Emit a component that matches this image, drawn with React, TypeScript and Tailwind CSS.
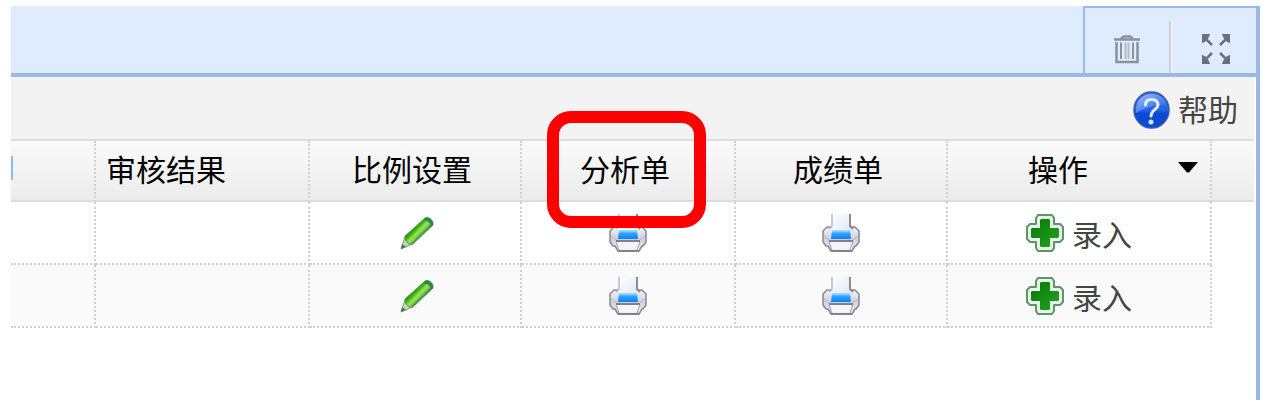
import * as React from "react";

function TrashIcon() {
  return (
    <svg width="28" height="30" viewBox="0 0 28 30" fill="none" stroke="#8b909d" aria-hidden>
      <path d="M1 5.500H27" strokeWidth="2.5" />
      <path d="M8 4.500L11 2.500H17L20 4.500" strokeWidth="2.5" />
      <path d="M3.500 8V28H24.500V8" strokeWidth="2.5" />
      <path d="M8 8.500V25M20 8.500V25" strokeWidth="2" />
      <path d="M12.500 8.500V25M15.500 8.500V25" strokeWidth="2" stroke="#b3bac8" />
    </svg>
  );
}

function ExpandIcon() {
  return (
    <svg width="30" height="32" viewBox="0 0 30 32" fill="#6b6f7b" stroke="#6b6f7b" aria-hidden>
      <g stroke="none">
        <path d="M1 1H9L8 4L4 9L1 10Z" />
        <path d="M29 1H21L22 4L26 9L29 10Z" />
        <path d="M1 31H9L8 28L4 23L1 22Z" />
        <path d="M29 31H21L22 28L26 23L29 22Z" />
      </g>
      <path d="M4 5L11 12M26 5L19 12M4 27L11 20M26 27L19 20" strokeWidth="2.5" />
    </svg>
  );
}

function HelpIcon() {
  return (
    <svg width="37" height="38" viewBox="0 0 37 38" aria-hidden>
      <defs>
        <linearGradient id="help-fill" x1="0" y1="0" x2="0" y2="1">
          <stop offset="0" stopColor="#3c6fe0" />
          <stop offset="0.5" stopColor="#2262e2" />
          <stop offset="0.6" stopColor="#0a4bd2" />
          <stop offset="1" stopColor="#0b49d0" />
        </linearGradient>
        <linearGradient id="help-shine" x1="0" y1="0" x2="1" y2="1">
          <stop offset="0" stopColor="#a9c8ff" />
          <stop offset="1" stopColor="#3d7cf0" stopOpacity="0.2" />
        </linearGradient>
      </defs>
      <ellipse cx="18.5" cy="19" rx="17.5" ry="18" fill="url(#help-fill)" stroke="#3458b4" strokeWidth="1.5" />
      <path d="M3 19C3 9 10 3 18.5 3C27 3 33 8 34 14C27 13 13 16 3 22Z" fill="url(#help-shine)" />
      <path
        d="M12.500 14C12.500 10 15 8.500 18.500 8.500C22.500 8.500 25 10.500 25 14C25 18.500 18 18.500 18 25"
        fill="none"
        stroke="#e3ebff"
        strokeWidth="3"
        strokeLinecap="round"
      />
      <circle cx="18" cy="31" r="2.5" fill="#d9e4ff" />
    </svg>
  );
}

function PencilIcon() {
  return (
    <svg width="34" height="34" viewBox="0 0 34 34" aria-hidden>
      <defs>
        <linearGradient id="pencil-fill" x1="12" y1="11" x2="21" y2="20" gradientUnits="userSpaceOnUse">
          <stop offset="0.1" stopColor="#129312" />
          <stop offset="0.35" stopColor="#3cb60c" />
          <stop offset="0.6" stopColor="#9be04f" />
          <stop offset="0.75" stopColor="#8fd660" />
          <stop offset="1" stopColor="#2d8f2f" />
        </linearGradient>
      </defs>
      <path d="M1 33L5 21L12 28Z" fill="#c9d3ba" stroke="#79a07d" strokeWidth="1" strokeLinejoin="round" />
      <path d="M5 20L25 2C28 0 34 4 33 9L13 28Q11 30 8 27Q4 24 5 20Z" fill="url(#pencil-fill)" stroke="#629967" strokeWidth="1" />
      <path d="M25 2C28 0 34 4 33 9L31 11C31 7 28 5 23 4Z" fill="#2b8a4c" />
      <path d="M1 33L2 28L6 31Z" fill="#497954" />
    </svg>
  );
}

function PrinterIcon() {
  return (
    <svg width="38" height="38" viewBox="0 0 38 38" aria-hidden>
      <defs>
        <linearGradient id="printer-body" x1="0" y1="0" x2="0" y2="1">
          <stop offset="0" stopColor="#f4f4f8" />
          <stop offset="0.5" stopColor="#cfcfdf" />
          <stop offset="1" stopColor="#f4f4f6" />
        </linearGradient>
        <linearGradient id="printer-blue" x1="0" y1="0" x2="0" y2="1">
          <stop offset="0" stopColor="#b9e3fa" />
          <stop offset="0.4" stopColor="#2ba2fb" />
          <stop offset="1" stopColor="#0c80fb" />
        </linearGradient>
        <linearGradient id="printer-paper" x1="0" y1="0" x2="1" y2="1">
          <stop offset="0" stopColor="#ffffff" />
          <stop offset="1" stopColor="#dce7f4" />
        </linearGradient>
      </defs>
      <path
        d="M9 13H5L1 17V28L4 32H6L9 37H30L33 32H34L37 28V17L33 13Z"
        fill="url(#printer-body)"
        stroke="#88888e"
        strokeWidth="1.5"
        strokeLinejoin="round"
      />
      <path d="M10 0H28V13L29 18H9L10 13Z" fill="url(#printer-paper)" />
      <path d="M10 0V12L7 15" fill="none" stroke="#b9b9c1" strokeWidth="1.5" />
      <path d="M28 0V12L31 15" fill="none" stroke="#8a8a90" strokeWidth="2" />
      <path d="M10 16H28L29 25H9Z" fill="url(#printer-blue)" />
      <path d="M2 22L8 26.500H30L36 22" fill="none" stroke="#b4b4c4" strokeWidth="1" />
      <path d="M7 27H31" stroke="#808086" strokeWidth="2" />
      <path d="M8 28H30L28 35H10Z" fill="#f4f4f5" />
      <path d="M7 28L10 36M31 28L28 36" stroke="#a4a4aa" strokeWidth="1" />
      <path d="M9 37H30" stroke="#77777b" strokeWidth="1.5" />
    </svg>
  );
}

function AddIcon() {
  return (
    <svg width="38" height="38" viewBox="0 0 38 38" aria-hidden>
      <defs>
        <linearGradient id="add-fill" x1="0" y1="0" x2="1" y2="1">
          <stop offset="0" stopColor="#067608" />
          <stop offset="1" stopColor="#23a51f" />
        </linearGradient>
      </defs>
      <path
        d="M12 1H26L28 4V10H34L37 13V25L34 28H28V34L26 37H12L10 34V28H4L1 25V13L4 10H10V4Z"
        fill="#e9f2ea"
        stroke="#5b9766"
        strokeWidth="2"
        strokeLinejoin="round"
      />
      <path
        d="M15 5H23L24 6V14H32L33 15V23L32 24H24V32L23 33H15L14 32V24H6L5 23V15L6 14H14V6Z"
        fill="url(#add-fill)"
      />
    </svg>
  );
}

const rows = [
  { id: 1, stripe: "" },
  { id: 2, stripe: "bg-[#fafafa]" },
];

const headCell = "h-[61px] p-0 pb-[6px] border-b-2 border-b-[#ddd] font-normal";
const dotted = "border-r-2 border-r-[#d0d0d0] [border-right-style:dotted]";
const bodyCell = "h-[63px] p-0 border-r-2 border-b-2 border-dotted border-[#d0d0d0] align-middle";

function Toolbar() {
  return (
    <div className="h-16 flex items-center justify-end pt-1 pr-4 bg-[#f3f3f3] border-b-2 border-[#ddd]">
      <button type="button" className="flex items-center gap-2 text-[#444]">
        <HelpIcon />
        <span className="pb-1">帮助</span>
      </button>
    </div>
  );
}

function ScoreTable() {
  return (
    <table className="w-full table-fixed border-separate border-spacing-0">
      <colgroup>
        <col className="w-[85px]" />
        <col className="w-[214px]" />
        <col className="w-[212px]" />
        <col className="w-[214px]" />
        <col className="w-[212px]" />
        <col className="w-[264px]" />
        <col />
      </colgroup>
      <thead className="bg-linear-to-b from-[#fafafa] to-[#ebebeb] text-black">
        <tr>
          <th className={`${headCell} ${dotted}`}>
            <span className="block w-[2px] h-6 bg-[#7fc0f8]" />
          </th>
          <th className={`${headCell} ${dotted} pl-[10px] text-left`}>审核结果</th>
          <th className={`${headCell} ${dotted} pr-[6px]`}>比例设置</th>
          <th className={`${headCell} ${dotted} pr-[6px] relative`}>
            分析单
            <span className="absolute z-10 -top-[30px] -bottom-7 left-[25px] right-7 border-[12px] border-[#f00] rounded-3xl pointer-events-none" />
          </th>
          <th className={`${headCell} ${dotted} pr-[6px]`}>成绩单</th>
          <th className={`${headCell} ${dotted}`}>
            <div className="flex items-center pr-3">
              <span className="flex-1 pl-3 pr-[42px] -mr-5">操作</span>
              <button type="button" aria-label="操作">
                <svg width="20" height="11" viewBox="0 0 20 11" aria-hidden>
                  <path d="M0 0H20L11 10.500H9Z" fill="#050505" />
                </svg>
              </button>
            </div>
          </th>
          <th className={headCell} />
        </tr>
      </thead>
      <tbody className="text-[#444]">
        {rows.map((r) => (
          <tr key={r.id}>
            <td className={`${bodyCell} ${r.stripe}`} />
            <td className={`${bodyCell} ${r.stripe}`} />
            <td className={`${bodyCell} ${r.stripe} pl-1`}>
              <button type="button" aria-label="比例设置" className="block mx-auto">
                <PencilIcon />
              </button>
            </td>
            <td className={`${bodyCell} ${r.stripe}`}>
              <button type="button" aria-label="分析单" className="block mx-auto">
                <PrinterIcon />
              </button>
            </td>
            <td className={`${bodyCell} ${r.stripe}`}>
              <button type="button" aria-label="成绩单" className="block mx-auto">
                <PrinterIcon />
              </button>
            </td>
            <td className={`${bodyCell} ${r.stripe}`}>
              <button type="button" className="flex items-center gap-2 mx-auto">
                <AddIcon />
                <span>录入</span>
              </button>
            </td>
          </tr>
        ))}
      </tbody>
    </table>
  );
}

export default function App() {
  return (
    <div className="min-h-screen flex flex-col pt-[6px] pl-[11px] pr-[7px] bg-white font-['Noto_Sans_CJK_SC',sans-serif] text-[30px] leading-9">
      <header className="h-[71px] flex justify-end bg-[#dfecff] border-b-4 border-[#99b9e9]">
        <div className="flex items-stretch border-t-2 border-l-2 border-r-4 border-[#99b9e9]">
          <button type="button" aria-label="删除" className="w-[84px] pt-4 flex justify-center items-center">
            <TrashIcon />
          </button>
          <span className="w-[3px] mt-[13px] bg-[#d0d0d4] border-r border-white" />
          <button type="button" aria-label="全屏" className="w-[84px] pt-4 pl-1 flex justify-center items-center">
            <ExpandIcon />
          </button>
        </div>
      </header>
      <main className="flex-1 border-r-4 border-[#99b9e9] pr-[2px]">
        <Toolbar />
        <ScoreTable />
      </main>
    </div>
  );
}
